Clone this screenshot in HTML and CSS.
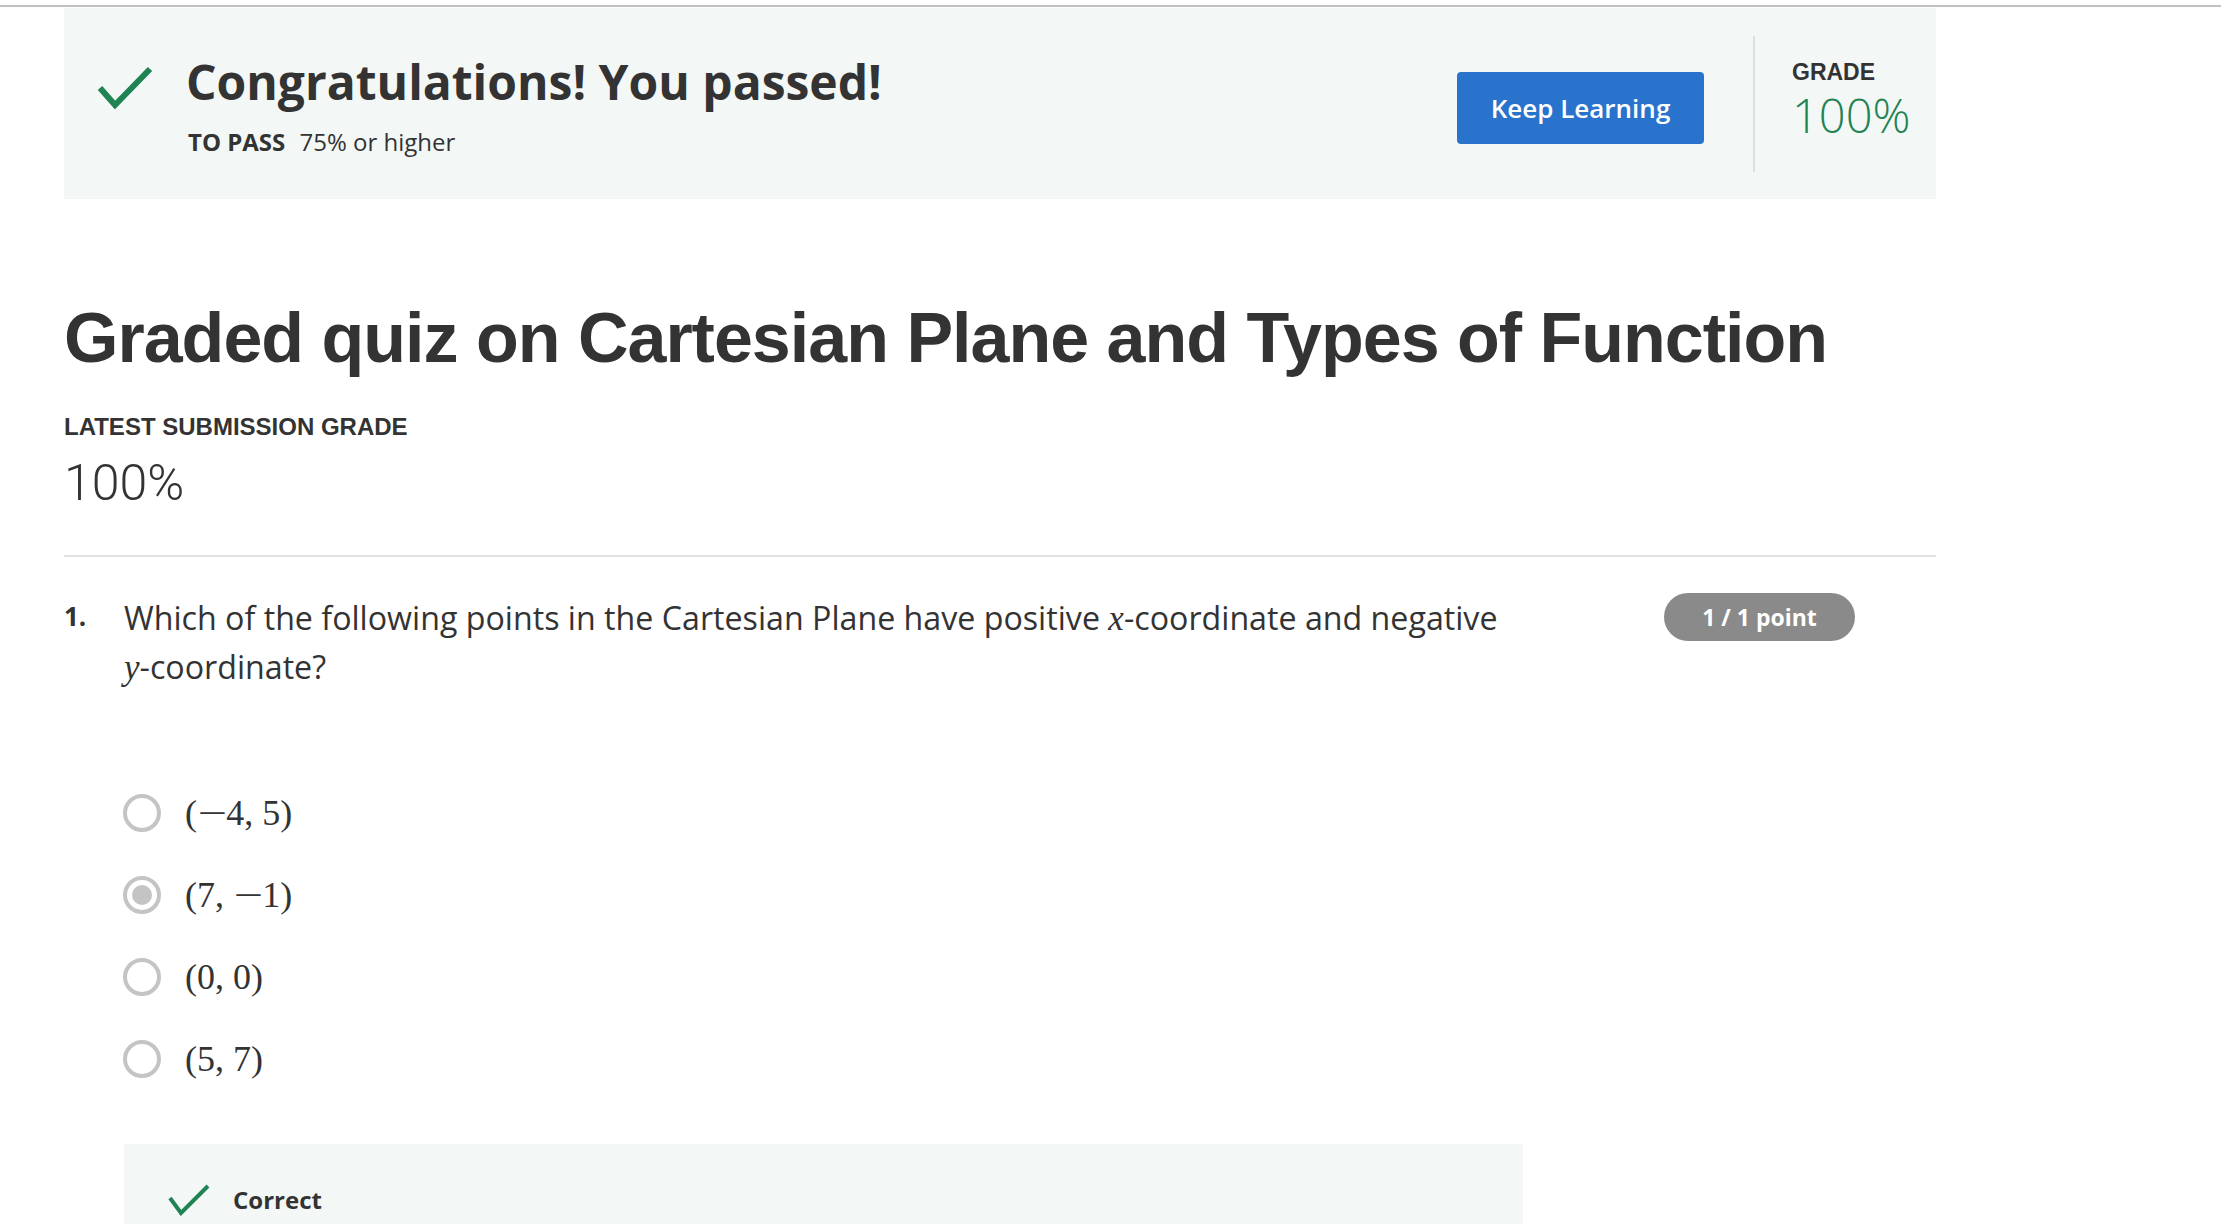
FILE: index.html
```html
<!DOCTYPE html>
<html lang="en">
<head>
<meta charset="utf-8">
<title>Graded quiz</title>
<link rel="stylesheet" href="styles.css">
</head>
<body>
<div class="topline"></div>
<main class="page">
  <section class="banner">
    <svg class="banner-check" width="56" height="43" viewBox="0 0 56 43"><polyline points="3,22 18,39 53,3" fill="none" stroke="#1f8354" stroke-width="6"/></svg>
    <div class="banner-text">
      <div class="banner-title">Congratulations! You passed!</div>
      <div class="banner-pass"><span class="pass-label">TO PASS</span> 75% or higher</div>
    </div>
    <button class="keep-btn" type="button">Keep Learning</button>
    <div class="banner-divider"></div>
    <div class="grade-block">
      <div class="grade-label">GRADE</div>
      <div class="grade-value">100%</div>
    </div>
  </section>

  <h1 class="quiz-title">Graded quiz on Cartesian Plane and Types of Function</h1>
  <div class="latest-label">LATEST SUBMISSION GRADE</div>
  <div class="latest-value">100%</div>
  <hr class="divider">

  <div class="question">
    <div class="q-num">1.</div>
    <div class="q-body">
      <div class="q-head">
        <p class="q-text">Which of the following points in the Cartesian Plane have positive <i class="mvar">x</i>-coordinate and negative <span class="nowrap"><i class="mvar">y</i>-coordinate?</span></p>
        <span class="badge">1 / 1 point</span>
      </div>
      <div class="options">
        <div class="option"><span class="radio"></span><span class="math">(<span class="minus">−</span>4, 5)</span></div>
        <div class="option"><span class="radio checked"></span><span class="math">(7, <span class="minus">−</span>1)</span></div>
        <div class="option"><span class="radio"></span><span class="math">(0, 0)</span></div>
        <div class="option"><span class="radio"></span><span class="math">(5, 7)</span></div>
      </div>
      <div class="feedback">
        <svg class="fb-check" width="42" height="32" viewBox="0 0 42 32"><polyline points="2,14 13,29 40,2" fill="none" stroke="#1f8354" stroke-width="4"/></svg>
        <span class="fb-text">Correct</span>
      </div>
    </div>
  </div>
</main>
</body>
</html>
```

FILE: styles.css
```css
html, body {
  margin: 0;
  padding: 0;
  background: #ffffff;
}
body {
  font-family: "Open Sans", "Liberation Sans", sans-serif;
  color: #333333;
  overflow: hidden;
}
.topline {
  height: 2px;
  margin-top: 5px;
  background: #c0c0c0;
}
.page {
  width: 1872px;
  margin-left: 64px;
}

/* Banner */
.banner {
  display: flex;
  align-items: flex-start;
  height: 191px;
  margin-top: 1px;
  background: #f3f8f6;
}
.banner-check {
  flex: none;
  margin-top: 58px;
  margin-left: 33px;
}
.banner-text {
  flex: 1;
  margin-left: 33px;
  margin-top: 46px;
}
.banner-title {
  font-size: 48px;
  line-height: 56px;
  font-weight: 700;
  color: #333333;
}
.banner-pass {
  margin-top: 17px;
  margin-left: 2px;
  font-size: 24px;
  line-height: 30px;
  color: #333333;
}
.pass-label {
  font-weight: 700;
  margin-right: 8px;
}
.keep-btn {
  flex: none;
  width: 247px;
  height: 72px;
  margin-top: 64px;
  padding: 0;
  border: none;
  border-radius: 4px;
  background: #2a73cc;
  color: #ffffff;
  font-family: "Open Sans", sans-serif;
  font-size: 26px;
  font-weight: 600;
}
.banner-divider {
  flex: none;
  width: 2px;
  height: 136px;
  margin-top: 28px;
  margin-left: 49px;
  background: #dcdfde;
}
.grade-block {
  flex: none;
  width: 144px;
  margin-left: 37px;
  margin-top: 51px;
}
.grade-label {
  font-family: "Liberation Sans", Arial, sans-serif;
  font-weight: 700;
  font-size: 23px;
  line-height: 26px;
  color: #333333;
}
.grade-value {
  margin-top: 5px;
  font-size: 47px;
  line-height: 50px;
  font-weight: 300;
  color: #1f8354;
}

/* Title */
.quiz-title {
  margin: 99px 0 0 0;
  font-family: "Liberation Sans", Arial, sans-serif;
  font-size: 70px;
  letter-spacing: -1px;
  line-height: 80px;
  font-weight: 700;
  color: #333333;
}
.latest-label {
  margin-top: 35px;
  font-family: "Liberation Sans", Arial, sans-serif;
  font-weight: 700;
  font-size: 24px;
  line-height: 28px;
  color: #333333;
}
.latest-value {
  margin-top: 12px;
  font-family: Roboto, "Liberation Sans", sans-serif;
  font-weight: 300;
  font-size: 50px;
  line-height: 60px;
  color: #333333;
}
.divider {
  margin: 42px 0 0 0;
  height: 2px;
  border: none;
  background: #e1e1e1;
}

/* Question */
.question {
  display: flex;
  margin-top: 37px;
}
.q-num {
  flex: none;
  width: 60px;
  font-size: 26px;
  line-height: 44px;
  font-weight: 700;
  color: #333333;
}
.q-body {
  flex: 1;
}
.q-head {
  display: flex;
  align-items: flex-start;
}
.q-text {
  margin: 0;
  width: 1420px;
  font-size: 32.2px;
  line-height: 48px;
  color: #333333;
}
.nowrap {
  white-space: nowrap;
}
.mvar {
  font-family: "Liberation Serif", "Times New Roman", serif;
  font-size: 35px;
  font-style: italic;
}
.badge {
  flex: none;
  margin-left: auto;
  margin-right: 81px;
  margin-top: -1px;
  width: 191px;
  height: 48px;
  border-radius: 24px;
  background: #8a8a8a;
  color: #ffffff;
  font-size: 23px;
  font-weight: 700;
  line-height: 48px;
  text-align: center;
}
.options {
  margin-top: 80px;
}
.option {
  display: flex;
  align-items: center;
  height: 82px;
}
.radio {
  flex: none;
  box-sizing: border-box;
  width: 38px;
  height: 38px;
  margin-left: -1px;
  border: 4px solid #c4c4c4;
  border-radius: 50%;
  display: flex;
  align-items: center;
  justify-content: center;
}
.radio.checked::after {
  content: "";
  width: 20px;
  height: 20px;
  border-radius: 50%;
  background: #c4c4c4;
}
.math {
  margin-left: 24px;
  font-family: "Liberation Serif", "Times New Roman", serif;
  font-size: 36px;
  color: #333333;
}
.minus {
  display: inline-block;
  transform: scaleX(1.45);
  margin: 0 4.5px;
}
.feedback {
  display: flex;
  align-items: center;
  width: 1399px;
  margin-top: 44px;
  padding: 40px 0 40px 44px;
  box-sizing: border-box;
  background: #f3f8f6;
}
.fb-check {
  flex: none;
}
.fb-text {
  margin-left: 23px;
  font-size: 24px;
  line-height: 32px;
  font-weight: 700;
  color: #333333;
}
```
